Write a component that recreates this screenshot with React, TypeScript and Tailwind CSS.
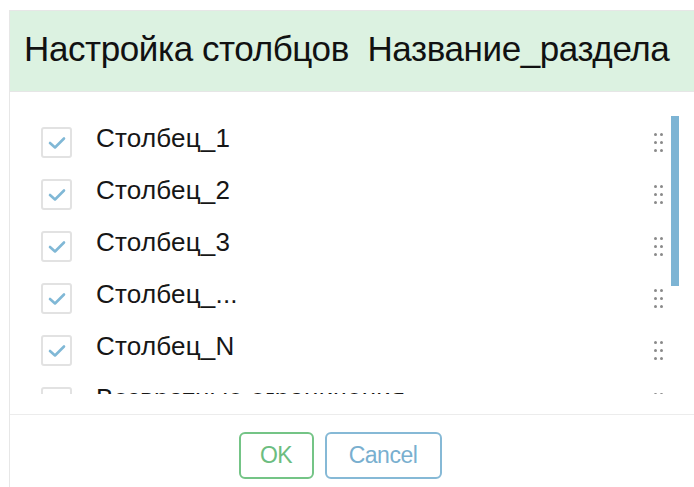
const columns = [
  { id: 1, title: 'Столбец_1', checked: true },
  { id: 2, title: 'Столбец_2', checked: true },
  { id: 3, title: 'Столбец_3', checked: true },
  { id: 4, title: 'Столбец_...', checked: true },
  { id: 5, title: 'Столбец_N', checked: true },
  { id: 6, title: 'Возвратные ограничения', checked: false },
];

const CheckBox = ({ checked }: { checked: boolean }) => (
  <div className="w-[31px] h-[31px] shrink-0 rounded-[3px] border-2 border-[#e2e2e2] bg-white flex items-center justify-center">
    {checked && (
      <svg width="20" height="16" viewBox="0 0 20 16" fill="none">
        <path
          d="M3 9 L8 13.5 L17 4.5"
          stroke="#80b8d6"
          strokeWidth="2.6"
          strokeLinecap="round"
          strokeLinejoin="round"
        />
      </svg>
    )}
  </div>
);

const DragHandle = () => (
  <div className="grid grid-cols-2 gap-x-[3px] gap-y-[5px]">
    {Array.from({ length: 6 }, (_, i) => (
      <span key={i} className="block w-[3px] h-[3px] rounded-full bg-[#8a8a8a]" />
    ))}
  </div>
);

const App = () => {
  return (
    <div className="w-full h-[487px] bg-white pt-[10px] pl-[9px] overflow-hidden font-['Liberation_Sans',sans-serif]">
      <div className="flex flex-col h-full border-l border-t border-[#e7e7e7]">
        <div className="h-[81px] shrink-0 bg-[#dcf2e1] border-b border-[#e6e6e6] flex items-center pl-[14px] pb-[6px]">
          <h1 className="text-[35px] leading-none text-[#111] tracking-[-0.4px] whitespace-nowrap">
            Настройка столбцов&nbsp;&nbsp;Название_раздела
          </h1>
        </div>

        <div className="relative h-[302px] shrink-0 overflow-hidden">
          <div className="pt-[24px]">
            {columns.map((col) => (
              <div key={col.id} className="h-[52px] flex items-center pl-[31px] pr-[31px]">
                <CheckBox checked={col.checked} />
                <span className="ml-[24px] mb-[8px] flex-1 text-[26px] leading-none text-[#161616] tracking-[0.2px] whitespace-nowrap">
                  {col.title}
                </span>
                <DragHandle />
              </div>
            ))}
          </div>
          <div className="absolute left-[661px] top-[24px] w-[8px] h-[170px] bg-[#7db4d4]" />
        </div>

        <div className="h-[21px] shrink-0 border-b border-[#ececec]" />

        <div className="flex justify-center gap-[11px] pt-[17px] pr-[24px]">
          <button className="w-[75px] h-[47px] rounded-[6px] border-2 border-[#74c486] text-[#6cbd80] text-[23px] tracking-[-0.5px]">
            OK
          </button>
          <button className="w-[117px] h-[47px] rounded-[6px] border-2 border-[#86b9d6] text-[#79afcf] text-[23px] tracking-[-0.5px]">
            Cancel
          </button>
        </div>
      </div>
    </div>
  );
};

export default App;
